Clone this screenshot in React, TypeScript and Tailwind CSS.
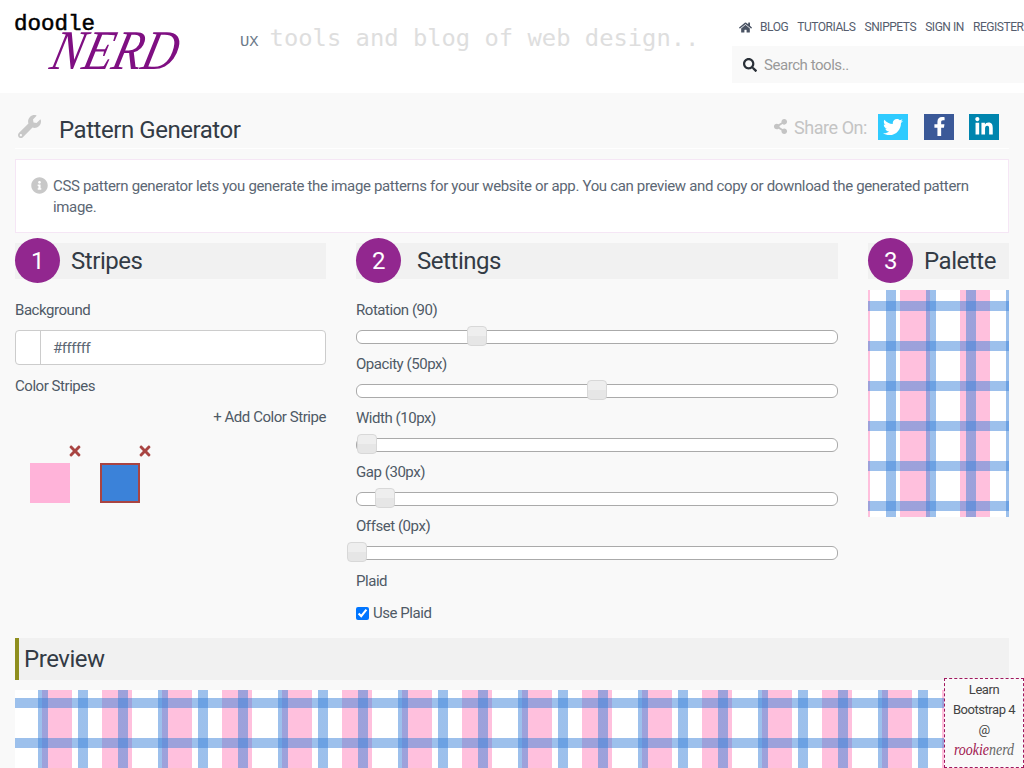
import React from 'react';
import { FaHome, FaSearch, FaWrench, FaInfoCircle, FaShareAlt, FaTwitter, FaFacebookF, FaLinkedinIn, FaTimes } from 'react-icons/fa';

const NAV_LINKS = ['Blog', 'Tutorials', 'Snippets', 'Sign In', 'Register'];

const SLIDERS = [
  { label: 'Rotation (90)', handle: 'left-[110px]' },
  { label: 'Opacity (50px)', handle: 'left-[230px]' },
  { label: 'Width (10px)', handle: 'left-0' },
  { label: 'Gap (30px)', handle: 'left-[18px]' },
  { label: 'Offset (0px)', handle: 'left-[-10px]' },
];

function StepHeading({ step, title, className }: { step: number; title: string; className: string }) {
  return (
    <div className="relative h-[45px]">
      <div className="absolute inset-x-0 top-[5px] h-9 bg-[#f1f1f1]" />
      <div className="relative flex h-full items-center">
        <span className="flex h-[45px] w-[45px] shrink-0 items-center justify-center rounded-full bg-[#92278f] text-[24px] text-white">
          {step}
        </span>
        <h2 className={`text-[24px] text-[#333b45] ${className}`}>{title}</h2>
      </div>
    </div>
  );
}

function Slider({ label, handle }: { label: string; handle: string }) {
  return (
    <div className="h-[54px]">
      <div className="h-[20px] text-[15px] leading-[20px]">{label}</div>
      <div className="relative mt-[10px] h-[14px] rounded-[6px] border border-[#aaaaaa] bg-white">
        <div className={`absolute top-[-5px] h-[20px] w-[20px] rounded-[4px] border border-[#d8d8d8] bg-[linear-gradient(#eeeeee_50%,#e6e6e6_50%)] ${handle}`} />
      </div>
    </div>
  );
}

function ColorStripe({ className }: { className: string }) {
  return (
    <div className="relative h-[59px] w-[40px]">
      <FaTimes className="absolute left-[37px] top-[-1px] h-[16px] w-[16px] text-[#a94442]" />
      <div className={`absolute top-[19px] h-[40px] w-[40px] ${className}`} />
    </div>
  );
}

export default function App() {
  return (
    <div className="relative h-[768px] w-[1024px] overflow-hidden bg-[#f9f9f9] font-['Roboto',sans-serif] tracking-[-0.45px] text-[#4f5a66]">
      <header className="flex h-[93px] bg-white">
        <div className="relative w-[239px] shrink-0">
          <span className="absolute left-[14px] top-[8px] font-['Liberation_Mono',monospace] text-[22.5px] leading-[32px] tracking-normal text-black [-webkit-text-stroke:0.5px_#000000]">
            doodle
          </span>
          <span className="absolute left-[53px] top-[18px] origin-left font-['Liberation_Serif',serif] text-[56px] italic leading-[64px] tracking-normal text-[#7f0f82] [transform:skewX(-14deg)_scaleX(0.86)]">
            NERD
          </span>
        </div>
        <div className="flex h-[76px] flex-1 items-center font-['DejaVu_Sans_Mono',monospace] tracking-normal">
          <span className="mr-[11px] mt-[10px] ml-[1px] font-['Liberation_Mono',monospace] text-[15.5px] text-[#6c7a89]">UX</span>
          <span className="mt-[1px] text-[23.8px] text-[#dedede]">tools and blog of web design..</span>
        </div>
        <div className="w-[292px] shrink-0">
          <nav className="flex h-[46px] items-center whitespace-nowrap pt-[8px] pl-[7px] text-[12px] uppercase text-[#555d6e]">
            <FaHome className="mr-[8px] h-[13px] w-[13px] shrink-0 text-[#4a5364]" />
            <a className="mr-[9px]">{NAV_LINKS[0]}</a>
            <a className="mr-[9px]">{NAV_LINKS[1]}</a>
            <a className="mr-[9px]">{NAV_LINKS[2]}</a>
            <a className="mr-[9px]">{NAV_LINKS[3]}</a>
            <a>{NAV_LINKS[4]}</a>
          </nav>
          <div className="flex h-[37px] items-center gap-[7px] bg-[#f9f9f9] pl-[11px] text-[15px] text-[#9a9a9a]">
            <FaSearch className="h-[14px] w-[14px] text-[#2a3038]" />
            <span className="mt-[1px]">Search tools..</span>
          </div>
        </div>
      </header>

      <main className="px-[15px]">
        <div className="flex h-[56px] items-center border-b border-white pt-[16px] pb-[4px] pr-[10px]">
          <FaWrench className="ml-[3px] h-[23px] w-[23px] text-[#c8c8c8]" />
          <h1 className="ml-[18px] mt-[7px] text-[24px] text-[#333b45]">Pattern Generator</h1>
          <div className="ml-auto flex items-center text-[#c4c4c4]">
            <FaShareAlt className="h-[15px] w-[15px]" />
            <span className="ml-[6px] mr-[11px] mt-[2px] text-[18px]">Share On:</span>
            <span className="flex h-[26px] w-[30px] items-center justify-center bg-[#2fcbff] text-white">
              <FaTwitter className="h-[20px] w-[20px]" />
            </span>
            <span className="ml-[16px] flex h-[26px] w-[30px] items-center justify-center bg-[#3b5998] text-white">
              <FaFacebookF className="h-[19px] w-[19px]" />
            </span>
            <span className="ml-[15px] flex h-[26px] w-[30px] items-center justify-center bg-[#0085ae] text-white">
              <FaLinkedinIn className="h-[20px] w-[20px]" />
            </span>
          </div>
        </div>

        <div className="mt-[10px] flex h-[74px] border border-[#f5e6f5] bg-white pl-[15px] pr-[30px] pt-[16px] text-[15px] leading-[21px] tracking-[-0.34px] text-[#5c6774]">
          <FaInfoCircle className="mr-[5px] mt-[1px] h-[17px] w-[17px] shrink-0 text-[#c8c8c8]" />
          <p>
            CSS pattern generator lets you generate the image patterns for your website or app. You can preview and copy or download the generated pattern image.
          </p>
        </div>

        <div className="mt-[5px] grid grid-cols-[311px_482px_141px] gap-x-[30px]">
          <section>
            <StepHeading step={1} title="Stripes" className="ml-[11px]" />
            <div className="mt-[17px] h-[20px] text-[15px] leading-[20px]">Background</div>
            <div className="mt-[10px] flex h-[35px] rounded-[4px] border border-[#cccccc] bg-white">
              <div className="w-[25px] border-r border-[#cccccc]" />
              <div className="pl-[12px] text-[15px] leading-[34px] text-[#5c6774]">#ffffff</div>
            </div>
            <div className="mt-[11px] h-[20px] text-[15px] leading-[20px]">Color Stripes</div>
            <div className="mt-[11px] h-[20px] text-right text-[15px] leading-[20px]">+ Add Color Stripe</div>
            <div className="mt-[17px] flex gap-[30px] pl-[15px]">
              <ColorStripe className="bg-[#ffb3d9]" />
              <ColorStripe className="border-2 border-[#a94442] bg-[#3b82d9]" />
            </div>
          </section>

          <section>
            <StepHeading step={2} title="Settings" className="ml-[16px]" />
            <div className="mt-[17px]">
              {SLIDERS.map((s) => (
                <Slider key={s.label} label={s.label} handle={s.handle} />
              ))}
              <div className="mt-[1px] h-[20px] text-[15px] leading-[20px]">Plaid</div>
              <label className="mt-[12px] flex h-[20px] items-center text-[15px]">
                <input type="checkbox" defaultChecked readOnly className="mr-[4px] h-[13px] w-[13px]" />
                Use Plaid
              </label>
            </div>
          </section>

          <section>
            <StepHeading step={3} title="Palette" className="ml-[11px]" />
            <div className="mt-[7px] h-[227px] bg-white [background-image:linear-gradient(#3b82d980_10px,transparent_10px),linear-gradient(90deg,#3b82d980_10px,transparent_10px),linear-gradient(90deg,#ffc0dd_30px,transparent_30px)] [background-position:0_11px,18px_0,32px_0] [background-size:100%_40px,40px_100%,60px_100%]" />
          </section>
        </div>

        <div className="mt-[15px] flex h-[42px] items-center border-l-4 border-[#8f8f1f] bg-[#f1f1f1] pl-[5px]">
          <h2 className="text-[24px] text-[#333b45]">Preview</h2>
        </div>
        <div className="mt-[10px] h-[80px] bg-white [background-image:linear-gradient(#3b82d980_10px,transparent_10px),linear-gradient(90deg,#3b82d980_10px,transparent_10px),linear-gradient(90deg,#ffc0dd_30px,transparent_30px)] [background-position:0_8px,23px_0,27px_0] [background-size:100%_40px,40px_100%,60px_100%]" />
      </main>

      <aside className="absolute bottom-0 right-0 h-[90px] w-[80px] border border-dashed border-[#a0175f] bg-[#f9f9f9] pt-[1px] text-center text-[13px] leading-[20px] text-[#444444]">
        <div>Learn</div>
        <div className="whitespace-nowrap">Bootstrap 4</div>
        <div>@</div>
        <div className="whitespace-nowrap font-['Liberation_Serif',serif] text-[17px] italic tracking-normal [transform:scaleX(0.82)]">
          <span className="text-[#a0174f]">rookie</span>
          <span className="text-[#666666]">nerd</span>
        </div>
      </aside>
    </div>
  );
}
